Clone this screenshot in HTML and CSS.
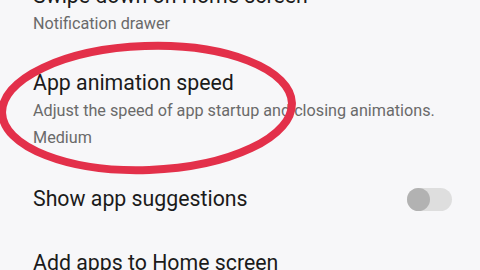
FILE: index.html
```html
<!DOCTYPE html>
<html lang="en">
<head>
  <meta charset="UTF-8">
  <title>Home screen settings</title>
  <meta name="viewport" content="width=device-width, initial-scale=1.0">
  <link rel="stylesheet" href="styles.css">
</head>
<body>

<div class="list">

  <!-- swipe down -->
  <div class="item">
    <div class="text">
      <div class="title">Swipe down on Home screen</div>
      <div class="summary">Notification drawer</div>
    </div>
  </div>

  <!-- animation speed -->
  <div class="item">
    <div class="text">
      <div class="title">App animation speed</div>
      <div class="summary">Adjust the speed of app startup and closing animations.</div>
      <div class="summary">Medium</div>
    </div>
  </div>

  <!-- suggestions -->
  <div class="item item-switch">
    <div class="text">
      <div class="title">Show app suggestions</div>
    </div>
    <div class="switch"><span class="thumb"></span></div>
  </div>

  <!-- add apps -->
  <div class="item">
    <div class="text">
      <div class="title">Add apps to Home screen</div>
    </div>
  </div>

</div>

<!-- hand drawn circle -->
<svg class="mark" width="480" height="270" viewBox="0 0 480 270">
  <ellipse cx="147" cy="108" rx="145" ry="62" transform="rotate(-2 147 108)"
           fill="none" stroke="#e3304a" stroke-width="8"/>
</svg>

</body>
</html>
```

FILE: styles.css
```css
body {
  font-family: Roboto, "Noto Sans", Arial, sans-serif;
  background: #f7f7f9;
  margin: 0;
  padding: 0;
  width: 480px;
  height: 270px;
  overflow: hidden;
  position: relative;
}

.list {
  margin-top: -34px;
}

.item {
  display: flex;
  align-items: center;
  padding: 16px 28px 16px 33px;
}

.item-switch {
  padding-top: 18px;
  padding-bottom: 20px;
}

.text {
  flex: 1;
}

.title {
  font-size: 21.3px;
  line-height: 28px;
  color: #1b1b1b;
  white-space: nowrap;
}

.summary {
  font-size: 16.2px;
  line-height: 27px;
  color: #6a6a6a;
  white-space: nowrap;
}

.switch {
  width: 45px;
  height: 23px;
  border-radius: 12px;
  background: #dedede;
  position: relative;
}

.thumb {
  position: absolute;
  left: 0;
  top: 0;
  width: 23px;
  height: 23px;
  border-radius: 50%;
  background: #b2b2b2;
}

.mark {
  position: absolute;
  left: 0;
  top: 0;
}
```
